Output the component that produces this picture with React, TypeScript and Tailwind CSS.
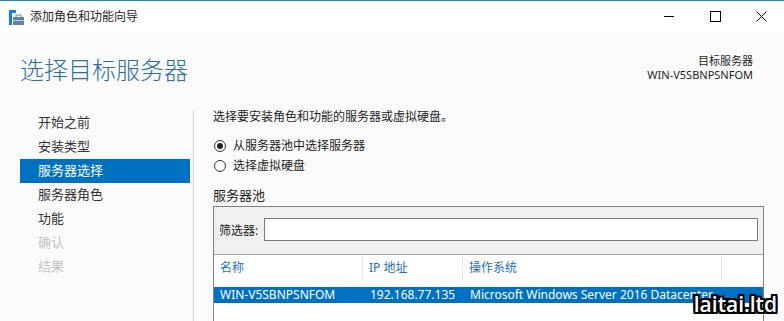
const steps = [
  { label: '开始之前', state: 'done' },
  { label: '安装类型', state: 'done' },
  { label: '服务器选择', state: 'active' },
  { label: '服务器角色', state: 'done' },
  { label: '功能', state: 'done' },
  { label: '确认', state: 'off' },
  { label: '结果', state: 'off' },
]

function AppIcon() {
  return (
    <svg width="16" height="16" viewBox="0 0 16 16" className="shrink-0">
      <rect x="0" y="0" width="7" height="3" fill="#1a7fd4" />
      <rect x="0" y="0" width="3" height="15" fill="#1a7fd4" />
      <rect x="4" y="7" width="11" height="8" fill="#5f84a6" />
      <rect x="7" y="5" width="5" height="3" fill="none" stroke="#5f84a6" strokeWidth="1" />
      <rect x="4" y="10" width="11" height="1" fill="#b8cbdc" />
    </svg>
  )
}

function Radio({ checked }: { checked?: boolean }) {
  return (
    <span className="w-[12px] h-[12px] rounded-full border border-[#333] bg-white flex items-center justify-center shrink-0">
      {checked && <span className="w-[6px] h-[6px] rounded-full bg-[#222]"></span>}
    </span>
  )
}

export default function App() {
  return (
    <div className="relative w-[784px] h-[321px] overflow-hidden bg-[#fbfbfb] text-[#1e1e1e] font-['Noto_Sans','Noto_Sans_CJK_SC',sans-serif]">
      {/* title bar */}
      <div className="h-[32px] bg-white border-t border-[#1883d7] flex items-center">
        <div className="pl-[9px] pt-[2px]"><AppIcon /></div>
        <div className="ml-[5px] text-[12px] leading-none">添加角色和功能向导</div>
        <div className="ml-auto flex items-center h-full">
          <div className="w-[46px] h-full flex items-center justify-center">
            <div className="w-[10px] h-px bg-black"></div>
          </div>
          <div className="w-[46px] h-full flex items-center justify-center">
            <div className="w-[11px] h-[11px] border border-black"></div>
          </div>
          <div className="w-[46px] h-full flex items-center justify-center">
            <svg width="11" height="11" viewBox="0 0 11 11">
              <path d="M0.5 0.5 L10.5 10.5 M10.5 0.5 L0.5 10.5" stroke="#000" strokeWidth="1" />
            </svg>
          </div>
        </div>
      </div>

      {/* header */}
      <div className="h-[78px] flex justify-between pl-[20px] pr-[31px]">
        <div className="pt-[26px] text-[24px] font-light leading-none text-[#2a6f9f]">选择目标服务器</div>
        <div className="pt-[22px] text-right text-[11px] leading-[14px]">
          <div>目标服务器</div>
          <div>WIN-V5SBNPSNFOM</div>
        </div>
      </div>

      {/* body */}
      <div className="flex h-[211px]">
        <div className="w-[194px] pl-[20px] pr-[3px] pt-[1px] border-r border-[#d6d6d6] text-[13px]">
          {steps.map((s, i) => (
            <div
              key={i}
              className={
                'h-[24px] pl-[18px] flex items-center ' +
                (s.state === 'active' ? 'bg-[#0070c0] text-white' : s.state === 'off' ? 'text-[#c4c4c4]' : 'text-[#333]')
              }
            >
              {s.label}
            </div>
          ))}
        </div>

        <div className="flex-1 pl-[19px] pr-[20px] text-[12px]">
          <div className="h-[13px] leading-[13px]">选择要安装角色和功能的服务器或虚拟硬盘。</div>
          <div className="mt-[17px] flex flex-col gap-[8px]">
            <div className="flex items-center gap-[7px] pl-[1px] h-[12px]">
              <Radio checked />
              <span>从服务器池中选择服务器</span>
            </div>
            <div className="flex items-center gap-[7px] pl-[1px] h-[12px]">
              <Radio />
              <span>选择虚拟硬盘</span>
            </div>
          </div>
          <div className="mt-[16px] text-[13px] leading-[14px]">服务器池</div>

          <div className="mt-[4px] border border-[#828282] border-b-0 h-[120px]">
            <div className="h-[48px] bg-[#f0f0f0] flex items-center pl-[5px] pr-[5px] border-b border-[#a8a8a8]">
              <span className="w-[45px]">筛选器:</span>
              <div className="flex-1 h-[23px] bg-white border border-[#7a7a7a] mt-[-2px]"></div>
            </div>
            <div className="bg-white h-full">
              <div className="h-[26px] flex text-[#1e6fb8]">
                <div className="w-[149px] pl-[6px] flex items-center border-r border-[#e6e6e6]">名称</div>
                <div className="w-[100px] pl-[6px] flex items-center border-r border-[#e6e6e6]">IP 地址</div>
                <div className="w-[259px] pl-[6px] flex items-center border-r border-[#e6e6e6]">操作系统</div>
                <div className="flex-1"></div>
              </div>
              <div className="mt-[6px] h-[16px] flex bg-[#0070c0] text-white items-center whitespace-nowrap overflow-hidden">
                <div className="w-[150px] pl-[6px] shrink-0">WIN-V5SBNPSNFOM</div>
                <div className="w-[100px] pl-[6px] shrink-0">192.168.77.135</div>
                <div className="pl-[6px] shrink-0">Microsoft Windows Server 2016 Datacenter</div>
              </div>
            </div>
          </div>
        </div>
      </div>

      {/* watermark */}
      <div className="absolute right-[7px] bottom-[6px] text-[21px] font-semibold leading-none text-white font-['Open_Sans',sans-serif] [text-shadow:-2px_0_0_#000,2px_0_0_#000,0_-2px_0_#000,0_2px_0_#000,-2px_-2px_0_#000,2px_2px_0_#000,-2px_2px_0_#000,2px_-2px_0_#000]">
        laitai.ltd
      </div>
    </div>
  )
}
